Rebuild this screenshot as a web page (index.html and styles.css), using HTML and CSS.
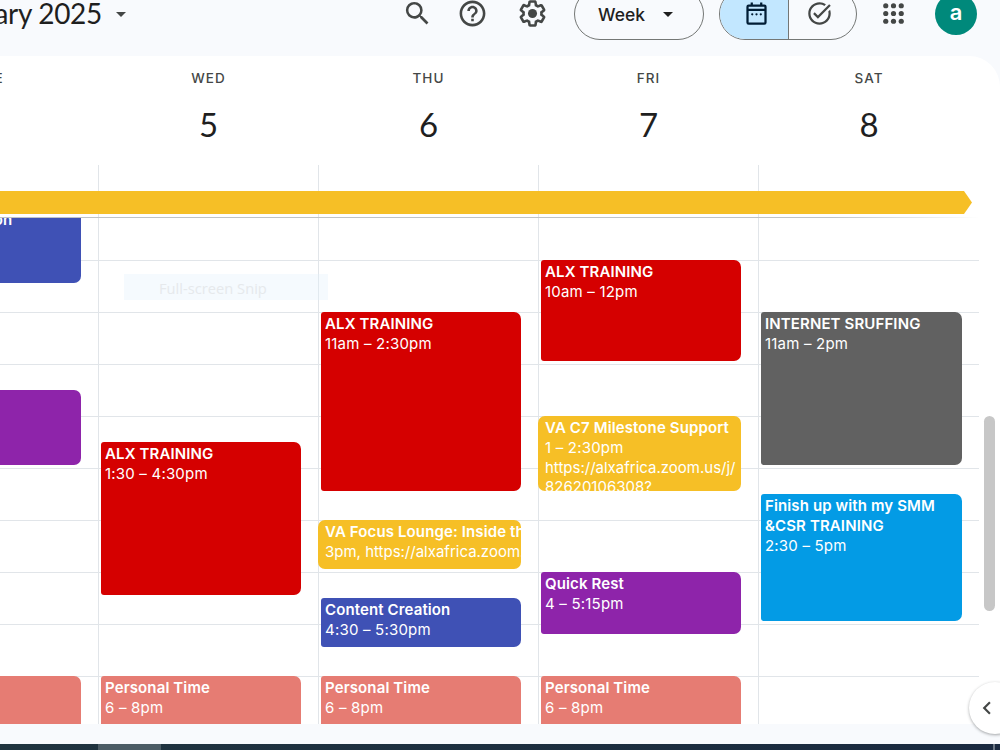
FILE: index.html
```html
<!DOCTYPE html>
<html lang="en">
<head>
    <meta charset="UTF-8">
    <meta name="viewport" content="width=device-width, initial-scale=1.0">
    <title>Calendar - February 2025</title>
    <link rel="stylesheet" href="styles.css">
</head>
<body>

    <header class="topbar">
        <div class="month">
            <h1>February 2025</h1>
            <span class="caret"></span>
        </div>
        <div class="tools">
            <svg class="icon search" viewBox="0 0 24 24"><path d="M15.5 14h-.79l-.28-.27A6.47 6.47 0 0 0 16 9.5 6.5 6.5 0 1 0 9.5 16c1.61 0 3.09-.59 4.23-1.57l.27.28v.79l5 4.99L20.49 19l-4.99-5zm-6 0C7.01 14 5 11.99 5 9.5S7.01 5 9.5 5 14 7.01 14 9.5 11.99 14 9.5 14z"/></svg>
            <svg class="icon help" viewBox="0 0 24 24"><path d="M11 18h2v-2h-2v2zm1-16C6.48 2 2 6.48 2 12s4.48 10 10 10 10-4.48 10-10S17.52 2 12 2zm0 18c-4.41 0-8-3.59-8-8s3.59-8 8-8 8 3.59 8 8-3.59 8-8 8zm0-14c-2.21 0-4 1.79-4 4h2c0-1.1.9-2 2-2s2 .9 2 2c0 2-3 1.75-3 5h2c0-2.25 3-2.5 3-5 0-2.21-1.79-4-4-4z"/></svg>
            <svg class="icon settings" viewBox="0 0 24 24"><path d="M13.85 22.25h-3.7c-.74 0-1.36-.54-1.45-1.27l-.27-1.89c-.27-.14-.53-.29-.79-.46l-1.8.72c-.7.26-1.47-.03-1.81-.65L2.2 15.53c-.35-.66-.2-1.44.36-1.88l1.53-1.19c-.01-.15-.02-.3-.02-.46 0-.15.01-.31.02-.46l-1.52-1.19c-.59-.45-.74-1.26-.37-1.88l1.85-3.19c.34-.62 1.11-.9 1.79-.63l1.81.73c.26-.17.52-.32.78-.46l.27-1.91c.09-.7.71-1.25 1.44-1.25h3.7c.74 0 1.36.54 1.45 1.27l.27 1.89c.27.14.53.29.79.46l1.8-.72c.71-.26 1.48.03 1.82.65l1.84 3.18c.36.66.2 1.44-.36 1.88l-1.52 1.19c.01.15.02.3.02.46s-.01.31-.02.46l1.52 1.19c.56.45.72 1.23.37 1.86l-1.86 3.22c-.34.62-1.11.9-1.8.63l-1.8-.72c-.26.17-.52.32-.78.46l-.27 1.91c-.1.68-.72 1.22-1.46 1.22zm-3.23-2h2.76l.37-2.55.53-.22c.44-.18.88-.44 1.34-.78l.45-.34 2.38.96 1.38-2.4-2.03-1.58.07-.56c.03-.26.06-.51.06-.78s-.03-.53-.06-.78l-.07-.56 2.03-1.58-1.39-2.4-2.39.96-.45-.35c-.42-.32-.87-.58-1.33-.77l-.52-.22-.37-2.55h-2.76l-.37 2.55-.53.21c-.44.19-.88.44-1.34.79l-.45.33-2.38-.95-1.39 2.39 2.03 1.58-.07.56a7 7 0 0 0-.06.79c0 .26.02.53.06.78l.07.56-2.03 1.58 1.38 2.4 2.39-.96.45.35c.43.33.86.58 1.33.77l.53.22.38 2.55z"/><circle cx="12" cy="12" r="3.5"/></svg>
            <button class="view">Week <span class="caret"></span></button>
            <div class="switch">
                <button class="active">
                    <svg class="icon outline" viewBox="0 0 24 24"><rect x="4" y="5" width="16" height="16" rx="1"/><path d="M4 8.7h16M7.8 2.3V5M16.2 2.3V5"/><path class="dots" d="M8.2 12.7h.01M12 12.7h.01M15.8 12.7h.01"/></svg>
                </button>
                <button>
                    <svg class="icon" viewBox="0 0 24 24"><path d="M22 5.18 10.59 16.6l-4.24-4.24 1.41-1.41 2.83 2.83 10-10L22 5.18zM19.79 10.22c.13.57.21 1.17.21 1.78 0 4.42-3.58 8-8 8s-8-3.58-8-8 3.58-8 8-8c1.58 0 3.04.46 4.28 1.25l1.44-1.44A9.9 9.9 0 0 0 12 2C6.48 2 2 6.48 2 12s4.48 10 10 10 10-4.48 10-10c0-1.19-.22-2.33-.6-3.39l-1.61 1.61z"/></svg>
                </button>
            </div>
            <svg class="icon apps" viewBox="0 0 24 24"><circle cx="6" cy="6" r="2"/><circle cx="12" cy="6" r="2"/><circle cx="18" cy="6" r="2"/><circle cx="6" cy="12" r="2"/><circle cx="12" cy="12" r="2"/><circle cx="18" cy="12" r="2"/><circle cx="6" cy="18" r="2"/><circle cx="12" cy="18" r="2"/><circle cx="18" cy="18" r="2"/></svg>
            <div class="avatar">a</div>
        </div>
    </header>

    <main class="calendar">
        <div class="week days">
            <div class="day"><span class="name">TUE</span><span class="num">4</span></div>
            <div class="day"><span class="name">WED</span><span class="num">5</span></div>
            <div class="day"><span class="name">THU</span><span class="num">6</span></div>
            <div class="day"><span class="name">FRI</span><span class="num">7</span></div>
            <div class="day"><span class="name">SAT</span><span class="num">8</span></div>
        </div>

        <div class="allday">
            <div class="week slots">
                <div class="slot"></div>
                <div class="slot"></div>
                <div class="slot"></div>
                <div class="slot"></div>
                <div class="slot"></div>
            </div>
            <div class="bar"></div>
        </div>

        <div class="scroller">
            <div class="week hours">
                <div class="column">
                    <div class="event indigo creation"><b>Content Creation</b></div>
                    <div class="event purple at-1230 len-6"></div>
                    <div class="event coral at-18 len-8"></div>
                </div>
                <div class="column">
                    <div class="event red at-1330 len-12"><b>ALX TRAINING</b><span>1:30 – 4:30pm</span></div>
                    <div class="event coral at-18 len-8"><b>Personal Time</b><span>6 – 8pm</span></div>
                </div>
                <div class="column">
                    <div class="event red at-11 len-14"><b>ALX TRAINING</b><span>11am – 2:30pm</span></div>
                    <div class="event yellow at-15 len-4 oneline"><b>VA Focus Lounge: Inside the Hub</b><span class="link">3pm, https://alxafrica.zoom.us</span></div>
                    <div class="event indigo at-1630 len-4"><b>Content Creation</b><span>4:30 – 5:30pm</span></div>
                    <div class="event coral at-18 len-8"><b>Personal Time</b><span>6 – 8pm</span></div>
                </div>
                <div class="column">
                    <div class="event red at-10 len-8"><b>ALX TRAINING</b><span>10am – 12pm</span></div>
                    <div class="event yellow at-13 len-6"><b>VA C7 Milestone Support</b><span>1 – 2:30pm</span><span class="link">https://alxafrica.zoom.us/j/<br>82620106308?</span></div>
                    <div class="event purple at-16 len-5"><b>Quick Rest</b><span>4 – 5:15pm</span></div>
                    <div class="event coral at-18 len-8"><b>Personal Time</b><span>6 – 8pm</span></div>
                </div>
                <div class="column">
                    <div class="event gray at-11 len-12"><b>INTERNET SRUFFING</b><span>11am – 2pm</span></div>
                    <div class="event blue at-1430 len-10"><b>Finish up with my SMM &amp;CSR TRAINING</b><span>2:30 – 5pm</span></div>
                </div>
            </div>
            <div class="scrollbar"></div>
        </div>
    </main>

    <footer class="taskbar">
        <div class="task"></div>
        <div class="peek"></div>
    </footer>

    <div class="snip">Full-screen Snip</div>
    <button class="side-toggle">
        <svg viewBox="0 0 24 24"><path d="M15.41 7.41 14 6l-6 6 6 6 1.41-1.41L10.83 12z"/></svg>
    </button>

</body>
</html>
```
FILE: styles.css
```css
* {
    margin: 0;
    padding: 0;
    box-sizing: border-box;
}

body {
    width: 1000px;
    height: 750px;
    overflow: hidden;
    position: relative;
    background-color: #f8fafd;
    font-family: Inter, 'Liberation Sans', sans-serif;
    color: #1f1f1f;
}

button {
    background: none;
    border: none;
    font: inherit;
    color: inherit;
}

/* Top bar */
.topbar {
    display: flex;
    justify-content: space-between;
    align-items: center;
    height: 84px;
    margin-top: -28px;
    padding-right: 23px;
}

.month {
    display: flex;
    align-items: center;
    width: 126px;
    justify-content: flex-end;
    gap: 14px;
}

.month h1 {
    padding-bottom: 2px;
    font-family: Lato, sans-serif;
    font-weight: 400;
    font-size: 28px;
    letter-spacing: -0.3px;
    white-space: nowrap;
}

.caret {
    flex: none;
    border: 5.5px solid transparent;
    border-top-color: #444746;
    border-bottom: 0;
}

.tools {
    display: flex;
    align-items: center;
}

.icon {
    display: block;
    width: 31px;
    height: 31px;
    margin-bottom: 1px;
    fill: #444746;
}

.search {
    margin-right: 24px;
}

.help {
    margin-right: 29px;
}

.settings {
    margin-right: 26px;
}

.view {
    display: flex;
    align-items: center;
    justify-content: center;
    gap: 18px;
    width: 130px;
    height: 52px;
    margin-right: 15px;
    padding-right: 7px;
    border: 1px solid #747775;
    border-radius: 26px;
    font-size: 17.5px;
    font-weight: 500;
}

.view .caret {
    border-top-color: #1f1f1f;
}

.switch {
    display: flex;
    width: 138px;
    height: 52px;
    margin-right: 21px;
    border: 1px solid #747775;
    border-radius: 26px;
    overflow: hidden;
}

.switch button {
    flex: 1;
    display: flex;
    align-items: center;
    justify-content: center;
    padding-right: 5px;
}

.switch .active {
    background-color: #c2e7ff;
    border-right: 1px solid #747775;
    padding: 0 0 0 5px;
}

.switch .icon {
    width: 27px;
    height: 27px;
}

.switch .outline {
    fill: none;
    stroke: #001d35;
    stroke-width: 2;
}

.outline .dots {
    stroke-linecap: round;
}

.apps {
    margin-right: 26px;
}

.avatar {
    width: 42px;
    height: 42px;
    border-radius: 50%;
    background-color: #00897b;
    color: white;
    font-size: 22px;
    font-weight: 600;
    line-height: 39px;
    text-align: center;
}

/* Calendar panel */
.calendar {
    height: 668px;
    background-color: white;
    border-top-right-radius: 31px;
    overflow: hidden;
}

.week {
    display: grid;
    grid-template-columns: repeat(4, 220px) 221px;
    width: 1101px;
    margin-left: -122px;
}

.days {
    height: 109px;
}

.day {
    display: flex;
    flex-direction: column;
    align-items: center;
    padding: 14px 0 0 1px;
}

.name {
    font-size: 13.5px;
    font-weight: 500;
    line-height: 17px;
    letter-spacing: 1.1px;
    color: #444746;
}

.num {
    margin-top: 16px;
    font-family: Lato, sans-serif;
    font-size: 33px;
    line-height: 42px;
}

.allday {
    height: 52px;
    width: 979px;
    position: relative;
    z-index: 1;
}

/* fading shadow under the all-day row */
.allday::after {
    content: "";
    position: absolute;
    left: 0;
    right: 0;
    bottom: -1px;
    height: 1px;
    background: linear-gradient(to right, #c0c3c5 85%, transparent);
}

.slots {
    height: 52px;
}

.slot {
    border-left: 1px solid #e1e5e9;
}

.bar {
    height: 23px;
    margin: -26px 7px 0 0;
    background-color: #f6bf26;
    clip-path: polygon(0 0, calc(100% - 8px) 0, 100% 50%, calc(100% - 8px) 100%, 0 100%);
}

.scroller {
    display: flex;
    height: 507px;
    overflow: hidden;
}

/* One row is a quarter of an hour, the first row is 9am */
.hours {
    flex: none;
    height: 572px;
    margin-top: -9px;
    background: repeating-linear-gradient(to bottom, #e1e5e9 0, #e1e5e9 1px, transparent 1px, transparent 52px);
}

.column {
    display: grid;
    grid-template-rows: repeat(44, 13px);
    border-left: 1px solid #e1e5e9;
}

.event {
    margin: 0 17px 3px 2px;
    padding: 2px 0 0 4px;
    border-radius: 3px 7px 7px 3px;
    overflow: hidden;
    color: white;
    font-size: 15px;
    line-height: 19.8px;
}

.column:last-child .event {
    margin-right: 17.5px;
}

.event b,
.event span {
    display: block;
}

.event b {
    font-weight: 600;
    letter-spacing: 0.12px;
}

.event span {
    letter-spacing: 0.2px;
}

.event .link {
    letter-spacing: 0;
}

.oneline {
    white-space: nowrap;
}

.red { background-color: #d50000; }
.coral { background-color: #e67c73; }
.indigo { background-color: #3f51b5; }
.purple { background-color: #8e24aa; }
.gray { background-color: #616161; }
.blue { background-color: #039be5; }

.yellow {
    background-color: #f6bf26;
    margin-left: -1px;
    padding-left: 7px;
    border-radius: 7px;
}

.at-10 { grid-row-start: 5; }
.at-11 { grid-row-start: 9; }
.at-1230 { grid-row-start: 15; }
.at-13 { grid-row-start: 17; }
.at-1330 { grid-row-start: 19; }
.at-1430 { grid-row-start: 23; }
.at-15 { grid-row-start: 25; }
.at-16 { grid-row-start: 29; }
.at-1630 { grid-row-start: 31; }
.at-18 { grid-row-start: 37; }

.len-4 { grid-row-end: span 4; }
.len-5 { grid-row-end: span 5; }
.len-6 { grid-row-end: span 6; }
.len-8 { grid-row-end: span 8; }
.len-10 { grid-row-end: span 10; }
.len-12 { grid-row-end: span 12; }
.len-14 { grid-row-end: span 14; }

.creation {
    grid-row: 1 / span 6;
    padding-left: 6px;
}

.scrollbar {
    width: 11px;
    height: 195px;
    margin: 199px 0 0 5px;
    border-radius: 6px;
    background-color: #c7c7c7;
}

/* Strip of the desktop taskbar */
.taskbar {
    display: flex;
    justify-content: space-between;
    height: 6px;
    margin-top: 20px;
    background: linear-gradient(to right, #20343f, #1a2a40);
}

.task {
    width: 63px;
    margin-left: 98px;
    background-color: #4c5c65;
}

.peek {
    width: 2px;
    margin-right: 5px;
    background-color: #6b7785;
}

/* Floating items */
.snip {
    position: absolute;
    left: 124px;
    top: 274px;
    width: 204px;
    height: 26px;
    padding-left: 35px;
    background-color: rgba(225, 240, 253, 0.35);
    color: #e6e9ec;
    font-family: 'Open Sans', sans-serif;
    font-size: 14.7px;
    line-height: 28px;
}

.side-toggle {
    position: absolute;
    left: 969px;
    top: 682px;
    width: 52px;
    height: 52px;
    border-radius: 50%;
    background-color: white;
    box-shadow: 0 1px 3px rgba(60, 64, 67, 0.45);
}

.side-toggle svg {
    display: block;
    width: 26px;
    height: 26px;
    margin-left: 5px;
    fill: #444746;
}
```
